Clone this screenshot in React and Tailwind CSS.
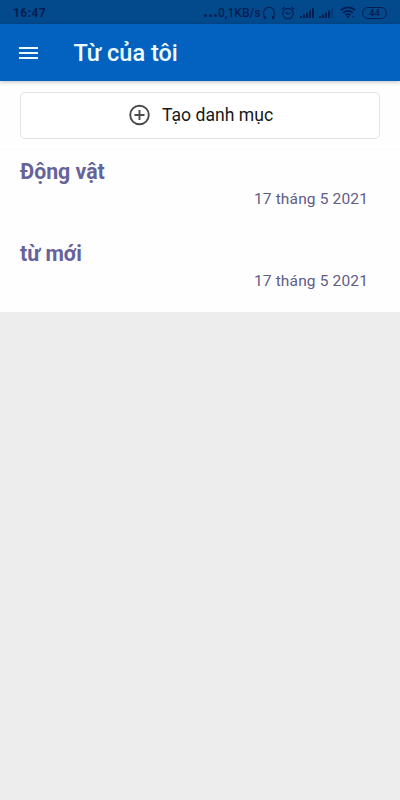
import React from 'react';

const categories = [
  { id: 1, name: 'Động vật', date: '17 tháng 5 2021' },
  { id: 2, name: 'từ mới', date: '17 tháng 5 2021' },
];

function HeadphonesIcon() {
  return (
    <svg width="14" height="14" viewBox="0 0 14 14" fill="none" stroke="currentColor" strokeWidth="1.1" className="shrink-0">
      <path d="M3.4 12.5H2.4C1.9 10.6 1.7 9 1.7 6.6a5.3 5.3 0 0 1 10.6 0c0 2.4-.2 4-.7 5.9h-1" />
      <path d="M3 10.2v2.8M11 10.2v2.8" strokeWidth="2" />
    </svg>
  );
}

function AlarmIcon() {
  return (
    <svg width="14" height="14" viewBox="0 0 14 14" fill="none" stroke="currentColor" strokeWidth="1.1" className="shrink-0">
      <circle cx="7" cy="7.6" r="5.2" />
      <path d="M.8 3.4 3.4 1M13.2 3.4 10.6 1M4.7 6.2 7 8l2.5-1.2" />
    </svg>
  );
}

function SignalIcon({ weak }) {
  return (
    <svg width="16" height="12" viewBox="0 0 16 12" fill="currentColor" className="shrink-0">
      <path d="M1 9h2v2H1zM4 7.5h2V11H4zM7 5.5h2V11H7z" />
      <path d="M10 3.5h2V11h-2z" />
      <path d="M13 1h2v10h-2z" opacity={weak ? 0.3 : 1} />
    </svg>
  );
}

function WifiIcon() {
  return (
    <svg width="16" height="13" viewBox="0 0 16 13" fill="none" stroke="currentColor" strokeWidth="1.7" className="shrink-0">
      <path d="M.8 4.2a10.6 10.6 0 0 1 14.4 0M3.2 6.8a7.2 7.2 0 0 1 9.6 0M5.4 9.2a4 4 0 0 1 5.2 0" />
      <path d="m6.3 10.5 1.7 1.8 1.7-1.8a2.6 2.6 0 0 0-3.4 0z" fill="currentColor" stroke="none" />
      <path d="m12 11.2 1.2-1.4 1.2 1.4z" fill="currentColor" stroke="none" />
    </svg>
  );
}

function StatusBar() {
  return (
    <div className="h-6 bg-[#034a8d] text-[#061d50] flex items-center pl-[13px] pr-[13px] pt-px">
      <span className="text-[12px] leading-none font-bold tracking-[0.45px]">16:47</span>
      <div className="ml-auto flex items-center">
        <div className="flex gap-[2px] mt-1.5 mr-px">
          <i className="size-[3px] rounded-full bg-current" />
          <i className="size-[3px] rounded-full bg-current" />
          <i className="size-[3px] rounded-full bg-current" />
        </div>
        <span className="text-[12px] leading-none font-medium w-[44px] whitespace-nowrap">0,1KB/s</span>
        <HeadphonesIcon />
        <div className="ml-[5px] flex"><AlarmIcon /></div>
        <div className="ml-[4px] flex"><SignalIcon /></div>
        <div className="ml-[3px] flex"><SignalIcon weak /></div>
        <div className="ml-[6px] flex"><WifiIcon /></div>
        <span className="ml-[6px] w-[25px] h-[12px] rounded-full border border-current flex items-center justify-center text-[9.5px] leading-none font-semibold">44</span>
      </div>
    </div>
  );
}

function Header() {
  return (
    <header className="relative h-[57px] bg-[#0361bf] flex items-center text-[#effcff] shadow-[0_1px_4px_rgba(0,0,0,0.25)]">
      <button className="ml-[19px] w-[19px] flex flex-col gap-[3px]" aria-label="Menu">
        <span className="h-[2px] w-full bg-current" />
        <span className="h-[2px] w-full bg-current" />
        <span className="h-[2px] w-full bg-current" />
      </button>
      <h1 className="ml-[35.5px] mt-[2px] text-[23.5px] leading-none font-medium">Từ của tôi</h1>
    </header>
  );
}

function App() {
  return (
    <div className="h-screen overflow-hidden bg-[#ededed] font-['Roboto',sans-serif]">
      <StatusBar />
      <Header />
      <main className="h-[231px] bg-[#fefefe]">
        <div className="h-[69px] px-5 pt-[11px] border-b border-[#fafafa]">
          <button className="w-full h-[47px] rounded-[5px] border border-[#e2e2e2] bg-white flex items-center pl-[107px] pb-[2px] text-[#181818]">
            <svg width="22" height="22" viewBox="0 0 22 22" fill="none" stroke="#4b4b4b" strokeWidth="1.9">
              <circle cx="11.5" cy="11" r="9.3" />
              <path d="M11.5 6v10M6.5 11h10" />
            </svg>
            <span className="ml-3 mt-[2px] text-[17.6px] leading-none">Tạo danh mục</span>
          </button>
        </div>
        {categories.map((item) => (
          <div key={item.id} className="h-[81.5px] pl-5 pr-8 pt-[9px]">
            <h2 className="text-[21.3px] leading-[26px] font-bold text-[#66639a]">{item.name}</h2>
            <p className="mt-[4px] text-right text-[15.5px] leading-5 tracking-[0.15px] text-[#605c86]">{item.date}</p>
          </div>
        ))}
      </main>
    </div>
  );
}

export default App;
